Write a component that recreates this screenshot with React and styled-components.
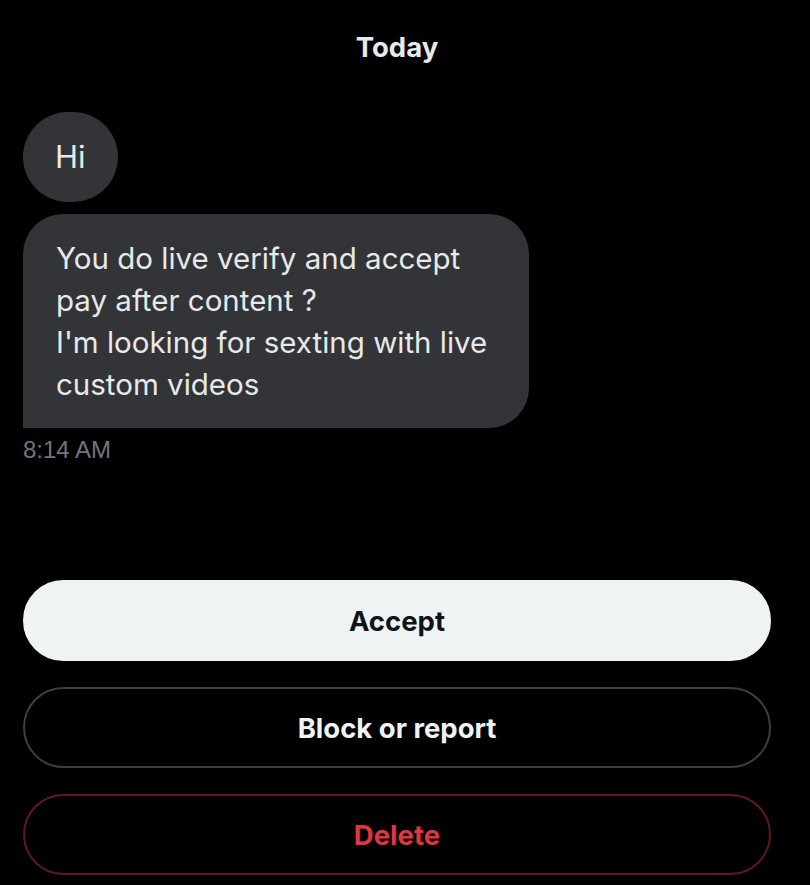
import React from "react";
import styled, { createGlobalStyle } from "styled-components";

const Global = createGlobalStyle`
  html, body { margin: 0; padding: 0; background: #000; }
  body { font-family: "Inter", "Open Sans", sans-serif; -webkit-font-smoothing: antialiased; }
  * { box-sizing: border-box; }
`;

const Page = styled.div`
  width: 810px;
  height: 885px;
  background: #000;
  padding: 0 39px 0 23px;
  display: flex;
  flex-direction: column;
  overflow: hidden;
`;

const DayLabel = styled.div`
  padding-top: 30px;
  text-align: center;
  font-family: "Inter", sans-serif;
  font-weight: 700;
  font-size: 27.5px;
  line-height: 34px;
  color: #e7e9ea;
`;

const Thread = styled.div`
  margin-top: 48px;
  display: flex;
  flex-direction: column;
  align-items: flex-start;
  gap: 12px;
`;

const Bubble = styled.div`
  background: #333438;
  color: #e7e9ea;
  font-family: "Inter", sans-serif;
  font-size: ${(p) => (p.$short ? "31px" : "29.5px")};
  line-height: 42px;
  white-space: pre-line;
  border-radius: ${(p) => (p.$short ? "46px" : "40px 40px 40px 0")};
  padding: ${(p) => (p.$short ? "24px 32px" : "23px 30px 23px 33px")};
  width: ${(p) => (p.$short ? "auto" : "506px")};
  height: ${(p) => (p.$short ? "90px" : "auto")};
`;

const Time = styled.div`
  margin-top: 10px;
  font-family: "Liberation Sans", Arial, sans-serif;
  font-size: 24px;
  line-height: 24px;
  color: #71767b;
`;

const Actions = styled.div`
  margin-top: 118px;
  display: flex;
  flex-direction: column;
  gap: 26px;
`;

const variants = {
  primary: { bg: "#eff3f4", fg: "#0f1419", border: "#eff3f4" },
  outline: { bg: "#000", fg: "#eff3f4", border: "#3b3e42" },
  danger: { bg: "#000", fg: "#e0363f", border: "#5e1a1e" },
};

const Button = styled.button`
  height: 81px;
  width: 100%;
  border-radius: 41px;
  border: 2px solid ${(p) => variants[p.$variant].border};
  background: ${(p) => variants[p.$variant].bg};
  color: ${(p) => variants[p.$variant].fg};
  font-family: "Inter", sans-serif;
  font-weight: 700;
  font-size: 27.5px;
  display: flex;
  align-items: center;
  justify-content: center;
  cursor: pointer;
  padding: 0;
`;

export default function App() {
  return (
    <>
      <Global />
      <Page>
        <DayLabel>Today</DayLabel>
        <Thread>
          <Bubble $short>Hi</Bubble>
          <Bubble>
            {"You do live verify and accept\npay after content ?\nI'm looking for sexting with live\ncustom videos"}
          </Bubble>
        </Thread>
        <Time>8:14 AM</Time>
        <Actions>
          <Button $variant="primary">Accept</Button>
          <Button $variant="outline">Block or report</Button>
          <Button $variant="danger">Delete</Button>
        </Actions>
      </Page>
    </>
  );
}
